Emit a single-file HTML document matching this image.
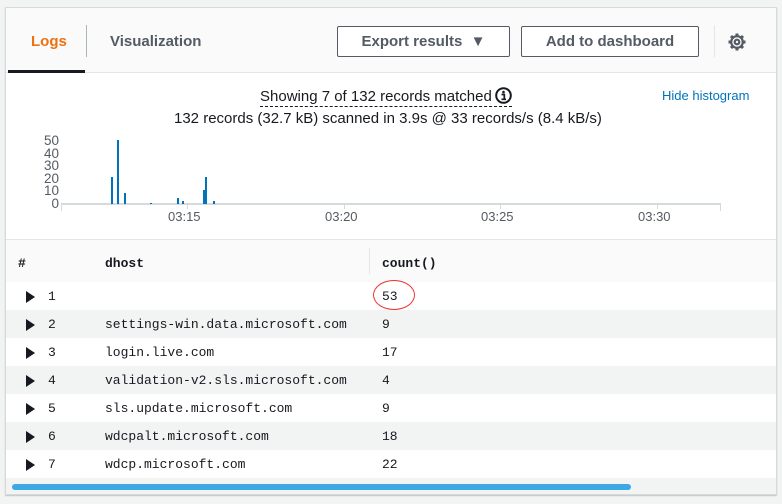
<!DOCTYPE html><html><head><style>
body{margin:0;background:#f2f3f3;width:782px;height:504px;position:relative;font-family:"Liberation Sans",sans-serif;overflow:hidden}
.p{position:absolute;left:5px;top:7px;width:770px;height:486px;background:#fff;border:1px solid #d5dbdb;box-shadow:0 1px 1px rgba(0,0,0,.2)}
.hd{position:absolute;left:0;top:0;width:770px;height:64px;background:#fafafa;border-bottom:1px solid #e4e6e6}
.a{position:absolute;white-space:nowrap}
.btn{position:absolute;top:18px;height:31px;border:1px solid #545b64;border-radius:2px;box-sizing:border-box;font-weight:bold;color:#545b64;font-size:15px;line-height:29px;text-align:center;background:#fff}
.m{font-family:"Liberation Mono",monospace;font-size:13px;color:#16191f}
.row{position:absolute;left:0;width:770px;height:28px}
.tri{position:absolute;left:20px;top:9px;width:0;height:0;border-left:9px solid #16191f;border-top:6px solid transparent;border-bottom:6px solid transparent}
.bar{position:absolute;width:2px;background:#0073bb}
</style></head><body>
<div class="p">
<div class="hd">
<div class="a" style="left:25px;top:25px;font-size:15px;font-weight:bold;color:#ec7211">Logs</div>
<div class="a" style="left:80px;top:17px;width:1px;height:32px;background:#aab7b8"></div>
<div class="a" style="left:104px;top:25px;font-size:15px;font-weight:bold;color:#545b64">Visualization</div>
<div class="a" style="left:2px;top:62px;width:77px;height:3px;background:#16191f"></div>
<div class="btn" style="left:331px;width:173px">Export results &nbsp;▼</div>
<div class="btn" style="left:515px;width:178px">Add to dashboard</div>
<div class="a" style="left:708px;top:17px;width:1px;height:32px;background:#e4e6e6"></div>
<svg class="a" style="left:721px;top:24px" width="20" height="20" viewBox="0 0 20 20"><g stroke="#545b64" stroke-width="2.2" fill="none"><circle cx="10" cy="10" r="5.8"/><circle cx="10" cy="10" r="2.3"/></g><g stroke="#545b64" stroke-width="3" stroke-linecap="butt"><path d="M10 1.5v3M10 15.5v3M1.5 10h3M15.5 10h3M4 4l2.1 2.1M13.9 13.9L16 16M4 16l2.1-2.1M13.9 6.1L16 4"/></g></svg>
</div>
<div class="a" style="left:254px;top:79px;font-size:15px;color:#16191f;border-bottom:1px dashed #16191f;padding-bottom:1px">Showing 7 of 132 records matched<svg style="vertical-align:-3px;margin-left:3px" width="17" height="17" viewBox="0 0 17 17"><circle cx="8.5" cy="8.5" r="7.3" fill="none" stroke="#16191f" stroke-width="2"/><circle cx="8.5" cy="5" r="1.3" fill="#16191f"/><path d="M6.5 7.5h2.8v4.5M6.5 12.3h4.5" stroke="#16191f" stroke-width="1.7" fill="none"/></svg></div>
<div class="a" style="left:168px;top:102px;font-size:15px;color:#16191f">132 records (32.7 kB) scanned in 3.9s @ 33 records/s (8.4 kB/s)</div>
<div class="a" style="left:656px;top:80px;font-size:13px;color:#0073bb">Hide histogram</div>
<div class="a" style="left:31px;top:127px;font-size:13.5px;line-height:12.6px;color:#545b64;text-align:right;width:22px">50<br>40<br>30<br>20<br>10<br>0</div>
<div class="a" style="left:55px;top:195px;width:660px;height:2px;background:#d5dbdb"></div>
<div class="a" style="left:55px;top:195px;width:1px;height:8px;background:#d5dbdb"></div>
<div class="a" style="left:181px;top:195px;width:1px;height:6px;background:#d5dbdb"></div>
<div class="a" style="left:338px;top:195px;width:1px;height:6px;background:#d5dbdb"></div>
<div class="a" style="left:494px;top:195px;width:1px;height:6px;background:#d5dbdb"></div>
<div class="a" style="left:651px;top:195px;width:1px;height:6px;background:#d5dbdb"></div>
<div class="a" style="left:714px;top:195px;width:1px;height:8px;background:#d5dbdb"></div>
<div class="a" style="left:162px;top:201px;font-size:13px;color:#545b64">03:15</div>
<div class="a" style="left:319px;top:201px;font-size:13px;color:#545b64">03:20</div>
<div class="a" style="left:475px;top:201px;font-size:13px;color:#545b64">03:25</div>
<div class="a" style="left:632px;top:201px;font-size:13px;color:#545b64">03:30</div>
<div class="bar" style="left:105px;top:169px;height:27px"></div>
<div class="bar" style="left:111px;top:132px;height:64px"></div>
<div class="bar" style="left:118px;top:185px;height:11px"></div>
<div class="bar" style="left:144px;top:195px;height:1px"></div>
<div class="bar" style="left:171px;top:190px;height:6px"></div>
<div class="bar" style="left:176px;top:193px;height:3px"></div>
<div class="bar" style="left:197px;top:182px;height:14px"></div>
<div class="bar" style="left:199px;top:169px;height:27px"></div>
<div class="bar" style="left:207px;top:193px;height:3px"></div>
<div class="a" style="left:0;top:231px;width:770px;height:42px;background:#fafafa;border-top:1px solid #e4e6e6;border-bottom:1px solid #e4e6e6"></div>
<div class="a" style="left:363px;top:240px;width:1px;height:26px;background:#e4e6e6"></div>
<div class="a m" style="left:12px;top:248px;font-weight:bold">#</div>
<div class="a m" style="left:99px;top:248px;font-weight:bold">dhost</div>
<div class="a m" style="left:376px;top:248px;font-weight:bold">count()</div>
<div class="row" style="top:274px;background:#fff"><div class="tri"></div><span class="a m" style="left:42px;top:7px">1</span><span class="a m" style="left:376px;top:7px">53</span><div class="a" style="left:367px;top:-2px;width:40px;height:28px;border:1px solid #e33;border-radius:50%"></div></div>
<div class="row" style="top:302px;background:#f2f3f3"><div class="tri"></div><span class="a m" style="left:42px;top:7px">2</span><span class="a m" style="left:99px;top:7px">settings-win.data.microsoft.com</span><span class="a m" style="left:376px;top:7px">9</span></div>
<div class="row" style="top:330px;background:#fff"><div class="tri"></div><span class="a m" style="left:42px;top:7px">3</span><span class="a m" style="left:99px;top:7px">login.live.com</span><span class="a m" style="left:376px;top:7px">17</span></div>
<div class="row" style="top:358px;background:#f2f3f3"><div class="tri"></div><span class="a m" style="left:42px;top:7px">4</span><span class="a m" style="left:99px;top:7px">validation-v2.sls.microsoft.com</span><span class="a m" style="left:376px;top:7px">4</span></div>
<div class="row" style="top:386px;background:#fff"><div class="tri"></div><span class="a m" style="left:42px;top:7px">5</span><span class="a m" style="left:99px;top:7px">sls.update.microsoft.com</span><span class="a m" style="left:376px;top:7px">9</span></div>
<div class="row" style="top:414px;background:#f2f3f3"><div class="tri"></div><span class="a m" style="left:42px;top:7px">6</span><span class="a m" style="left:99px;top:7px">wdcpalt.microsoft.com</span><span class="a m" style="left:376px;top:7px">18</span></div>
<div class="row" style="top:442px;background:#fff"><div class="tri"></div><span class="a m" style="left:42px;top:7px">7</span><span class="a m" style="left:99px;top:7px">wdcp.microsoft.com</span><span class="a m" style="left:376px;top:7px">22</span></div>
<div class="a" style="left:0;top:470px;width:770px;height:16px;background:#f2f3f3"></div>
<div class="a" style="left:6px;top:476px;width:619px;height:6px;border-radius:3px;background:#3ea8e5"></div>
</div>
</body></html>
